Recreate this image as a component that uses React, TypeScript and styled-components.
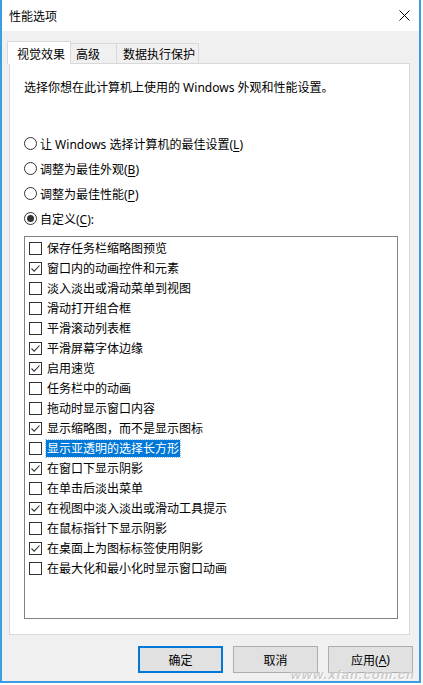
import React from "react";
import styled, { createGlobalStyle } from "styled-components";

const GlobalStyle = createGlobalStyle`
  html, body {
    margin: 0;
    padding: 0;
    background: #ffffff;
  }
  body {
    font-family: "Noto Sans", "Noto Sans CJK SC", sans-serif;
    font-size: 12px;
    color: #000;
  }
`;

const Window = styled.div`
  position: relative;
  width: 421px;
  height: 683px;
  box-sizing: border-box;
  border: 2px solid #3d9be1;
  border-top: none;
  display: flex;
  flex-direction: column;
  overflow: hidden;
`;

const TitleBar = styled.div`
  height: 31px;
  flex: none;
  background: #ffffff;
  display: flex;
  align-items: center;
  justify-content: space-between;
  padding: 0 9px 0 7px;
`;

const Title = styled.span`
  font-family: "Noto Sans CJK SC", sans-serif;
  font-size: 12px;
  line-height: 16px;
`;

const Body = styled.div`
  flex: 1;
  background: #f0f0f0;
  padding: 10px 6px 8px 5px;
  display: flex;
  flex-direction: column;
`;

const TabStrip = styled.div`
  position: relative;
  z-index: 1;
  height: 23px;
  margin-bottom: -1px;
  display: flex;
  align-items: flex-end;
`;

const Tab = styled.div<{ $active?: boolean; $w: number; $pad: number }>`
  box-sizing: border-box;
  width: ${(p) => p.$w}px;
  height: ${(p) => (p.$active ? 23 : 20)}px;
  margin-bottom: ${(p) => (p.$active ? 0 : 1)}px;
  margin-left: ${(p) => (p.$active ? 0 : -1)}px;
  padding-left: ${(p) => p.$pad}px;
  border: 1px solid #d9d9d9;
  border-bottom: none;
  background: ${(p) => (p.$active ? "#ffffff" : "#f0f0f0")};
  display: flex;
  align-items: center;
  font-family: "Noto Sans CJK SC", sans-serif;
  white-space: nowrap;
  &:first-child {
    margin-left: 0;
  }
`;

const Panel = styled.div`
  height: 572px;
  box-sizing: border-box;
  margin: 0 3px 0 2px;
  border: 1px solid #d9d9d9;
  background: #ffffff;
  padding: 16px 12px 0 14px;
`;

const Intro = styled.div`
  line-height: 16px;
  white-space: nowrap;
`;

const RadioGroup = styled.div`
  margin-top: 35px;
  display: flex;
  flex-direction: column;
`;

const RadioRow = styled.div`
  height: 25px;
  display: flex;
  align-items: center;
  gap: 3px;
  white-space: nowrap;
`;

const RadioCircle = styled.span<{ $on?: boolean }>`
  width: 13px;
  height: 13px;
  box-sizing: border-box;
  border: 1px solid #333;
  border-radius: 50%;
  background: #fff;
  display: flex;
  align-items: center;
  justify-content: center;
  &::after {
    content: "";
    display: ${(p) => (p.$on ? "block" : "none")};
    width: 7px;
    height: 7px;
    border-radius: 50%;
    background: #333;
  }
`;

const Key = styled.span`
  text-decoration: underline;
  text-underline-offset: 2px;
`;

const ListBox = styled.div`
  margin-top: 5px;
  width: 374px;
  height: 383px;
  box-sizing: border-box;
  border: 1px solid #828282;
  padding: 1px 0 0 4px;
`;

const Item = styled.div`
  height: 20px;
  display: flex;
  align-items: center;
  gap: 5px;
  white-space: nowrap;
`;

const Box = styled.span`
  width: 13px;
  height: 13px;
  box-sizing: border-box;
  border: 1px solid #333;
  background: #fff;
  display: flex;
  align-items: center;
  justify-content: center;
  flex: none;
`;

const Label = styled.span<{ $selected?: boolean }>`
  line-height: 17px;
  padding: 0 1px;
  margin-left: -1px;
  background: ${(p) => (p.$selected ? "#0078d7" : "transparent")};
  color: ${(p) => (p.$selected ? "#ffffff" : "#000000")};
  outline: ${(p) => (p.$selected ? "1px dotted #9cc8ee" : "none")};
`;

const ButtonRow = styled.div`
  margin-top: 11px;
  display: flex;
  justify-content: flex-end;
  gap: 10px;
`;

const Button = styled.div<{ $default?: boolean }>`
  width: 85px;
  height: 27px;
  box-sizing: border-box;
  border: ${(p) => (p.$default ? "2px solid #0078d7" : "1px solid #adadad")};
  background: #e1e1e1;
  display: flex;
  align-items: center;
  justify-content: center;
  white-space: nowrap;
`;

const Watermark = styled.div`
  position: absolute;
  right: 4px;
  bottom: 0;
  font-family: "Liberation Sans", sans-serif;
  font-size: 13px;
  line-height: 12px;
  font-weight: bold;
  font-style: italic;
  letter-spacing: 1px;
  color: rgba(180, 180, 180, 0.7);
  text-shadow: 0 0 1px #fff, 1px 1px 0 rgba(255, 255, 255, 0.8);
  pointer-events: none;
`;

const CloseIcon = () => (
  <svg width="11" height="11" viewBox="0 0 11 11">
    <path d="M0.5 0.5 L10.5 10.5 M10.5 0.5 L0.5 10.5" stroke="#000" strokeWidth="1" fill="none" />
  </svg>
);

const Check = () => (
  <svg width="11" height="11" viewBox="0 0 11 11">
    <path d="M1.5 5.5 L4.2 8.2 L9.5 2.5" stroke="#333" strokeWidth="1.1" fill="none" />
  </svg>
);

const effects: { text: string; on: boolean; selected?: boolean }[] = [
  { text: "保存任务栏缩略图预览", on: false },
  { text: "窗口内的动画控件和元素", on: true },
  { text: "淡入淡出或滑动菜单到视图", on: false },
  { text: "滑动打开组合框", on: false },
  { text: "平滑滚动列表框", on: false },
  { text: "平滑屏幕字体边缘", on: true },
  { text: "启用速览", on: true },
  { text: "任务栏中的动画", on: false },
  { text: "拖动时显示窗口内容", on: false },
  { text: "显示缩略图，而不是显示图标", on: true },
  { text: "显示亚透明的选择长方形", on: false, selected: true },
  { text: "在窗口下显示阴影", on: true },
  { text: "在单击后淡出菜单", on: false },
  { text: "在视图中淡入淡出或滑动工具提示", on: true },
  { text: "在鼠标指针下显示阴影", on: false },
  { text: "在桌面上为图标标签使用阴影", on: true },
  { text: "在最大化和最小化时显示窗口动画", on: false },
];

const App: React.FC = () => {
  return (
    <>
      <GlobalStyle />
      <Window>
        <TitleBar>
          <Title>性能选项</Title>
          <CloseIcon />
        </TitleBar>
        <Body>
          <TabStrip>
            <Tab $active $w={64} $pad={9}>视觉效果</Tab>
            <Tab $w={47} $pad={5}>高级</Tab>
            <Tab $w={83} $pad={6}>数据执行保护</Tab>
          </TabStrip>
          <Panel>
            <Intro>选择你想在此计算机上使用的 Windows 外观和性能设置。</Intro>
            <RadioGroup>
              <RadioRow>
                <RadioCircle />
                <span>让 Windows 选择计算机的最佳设置(<Key>L</Key>)</span>
              </RadioRow>
              <RadioRow>
                <RadioCircle />
                <span>调整为最佳外观(<Key>B</Key>)</span>
              </RadioRow>
              <RadioRow>
                <RadioCircle />
                <span>调整为最佳性能(<Key>P</Key>)</span>
              </RadioRow>
              <RadioRow>
                <RadioCircle $on />
                <span>自定义(<Key>C</Key>):</span>
              </RadioRow>
            </RadioGroup>
            <ListBox>
              {effects.map((e) => (
                <Item key={e.text}>
                  <Box>{e.on && <Check />}</Box>
                  <Label $selected={e.selected}>{e.text}</Label>
                </Item>
              ))}
            </ListBox>
          </Panel>
          <ButtonRow>
            <Button $default>确定</Button>
            <Button>取消</Button>
            <Button>应用(<Key>A</Key>)</Button>
          </ButtonRow>
        </Body>
        <Watermark>www.xfan.com.cn</Watermark>
      </Window>
    </>
  );
};

export default App;
